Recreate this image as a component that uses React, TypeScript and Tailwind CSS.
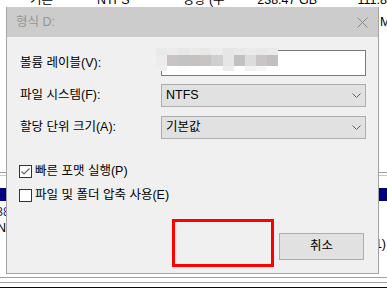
import React from 'react';

const blurTop = ['bg-[#e9e9e9]', 'bg-[#ebebeb]', 'bg-[#e7e7e7]', 'bg-[#eaeaea]', 'bg-[#e8e8e8]', 'bg-[#ececec]', 'bg-[#e6e6e6]', 'bg-[#e9e9e9]', 'bg-[#ebebeb]', 'bg-[#e8e8e8]', 'bg-[#eaeaea]'];
const blurMid = ['bg-[#ececec]', 'bg-[#c9c3c3]', 'bg-[#c3c3c3]', 'bg-[#c6c2c2]', 'bg-[#c8c4c4]', 'bg-[#cfcfcf]', 'bg-[#e6e6e6]', 'bg-[#bec2c4]', 'bg-[#dcdcdc]', 'bg-[#cac5c5]', 'bg-[#bfc0c2]'];
const blurBot = ['bg-[#efefef]', 'bg-[#ffffff]', 'bg-[#fdfdfd]', 'bg-[#ffffff]', 'bg-[#ffffff]', 'bg-[#fbfbfb]', 'bg-[#ececec]', 'bg-[#ffffff]', 'bg-[#f3f1f1]', 'bg-[#f6f7f9]', 'bg-[#ffffff]'];

function Chevron() {
  return (
    <svg width="9" height="5" viewBox="0 0 9 5" className="mr-[4px]">
      <path d="M0.5 0.5 L4.5 4.5 L8.5 0.5" fill="none" stroke="#606060" strokeWidth="1" />
    </svg>
  );
}

function Select({ value }: { value: string }) {
  return (
    <div className="flex h-[23px] w-[205px] items-center justify-between border border-[#adadad] bg-[#e1e1e1] pl-[4px] text-black">
      <span>{value}</span>
      <Chevron />
    </div>
  );
}

function Checkbox({ checked, label }: { checked: boolean; label: string }) {
  return (
    <div className="-ml-[1px] flex h-[13px] items-center gap-[3px]">
      <div className="flex h-[13px] w-[13px] items-center justify-center border border-[#333333] bg-white">
        {checked && (
          <svg width="11" height="11" viewBox="0 0 11 11">
            <path d="M1.5 5.5 L4 8 L9.5 2.5" fill="none" stroke="#666666" strokeWidth="1.2" />
          </svg>
        )}
      </div>
      <span className="leading-[13px] text-black">{label}</span>
    </div>
  );
}

export default function App() {
  return (
    <div className="relative h-[288px] w-[387px] overflow-hidden bg-white font-['Liberation_Sans','Noto_Sans_CJK_KR',sans-serif] text-[12.5px] text-black">
      {/* disk list behind the dialog */}
      <div className="flex flex-col">
        <div className="-mt-[8px] flex h-[16px] items-center whitespace-nowrap pl-[30px]">
          <span className="w-[68px]">기본</span>
          <span className="w-[87px]">NTFS</span>
          <span className="w-[76px]">정상 (주</span>
          <span className="w-[102px]">238.47 GB</span>
          <span>111.8</span>
        </div>
        <div className="h-[6px]" />
        <div className="flex h-[16px] items-center pl-[380px]">MI</div>
        <div className="h-[142px]" />
        <div className="h-px bg-[#a0a0a0]" />
        <div className="h-[2px]" />
        <div className="h-px bg-[#c8c8c8]" />
        <div className="h-[12px]" />
        <div className="h-[13px] bg-[#000080]" />
        <div className="h-[3px]" />
        <div className="flex h-[16px] items-center -ml-[4px] text-[#1a2a6a]">38</div>
        <div className="flex h-[16px] items-center -ml-[3px]">NT</div>
        <div className="flex h-[16px] items-center justify-between pl-[12px] pr-[1px]">
          <span>]</span>
          <span>1)</span>
        </div>
        <div className="h-[25px]" />
        <div className="h-px bg-[#a0a0a0]" />
        <div className="h-[4px]" />
        <div className="h-px bg-[#a0a0a0]" />
        <div className="h-[4px]" />
        <div className="h-[2px] bg-[#000060]" />
      </div>

      {/* format dialog */}
      <div className="absolute left-[6px] top-[7px] flex h-[267px] w-[373px] flex-col border border-t-0 border-[#a3a3a3] bg-[#f0f0f0]">
        <div className="flex h-[30px] items-center justify-between bg-[#cccccc] pl-[9px] pr-[10px]">
          <span className="text-[#959595]">형식 D:</span>
          <svg width="11" height="11" viewBox="0 0 11 11">
            <path d="M0.5 0.5 L10.5 10.5 M10.5 0.5 L0.5 10.5" stroke="#8a8a8a" strokeWidth="1" />
          </svg>
        </div>

        <div className="flex flex-col pl-[13px] pt-[13px]">
          <div className="flex h-[26px] items-center">
            <span className="w-[141px]">볼륨 레이블(V):</span>
            <div className="h-[26px] w-[205px] border border-[#7a7a7a] bg-white" />
          </div>
          <div className="mt-[8px] flex items-center">
            <span className="w-[141px]">파일 시스템(F):</span>
            <Select value="NTFS" />
          </div>
          <div className="mt-[9px] flex items-center">
            <span className="w-[141px]">할당 단위 크기(A):</span>
            <Select value="기본값" />
          </div>

          <div className="mt-[26px]">
            <Checkbox checked label="빠른 포맷 실행(P)" />
          </div>
          <div className="mt-[11px]">
            <Checkbox checked={false} label="파일 및 폴더 압축 사용(E)" />
          </div>

          <div className="mt-[17px] flex items-start">
            <div className="ml-[152px] h-[48px] w-[102px] border-[3px] border-[#ff0000]" />
            <button className="ml-[5px] mt-[14px] flex h-[27px] w-[85px] items-center justify-center border border-[#adadad] bg-[#e1e1e1] text-black">
              취소
            </button>
          </div>
        </div>

        {/* redacted label text */}
        <div className="absolute left-[149px] top-[41px] flex w-[122px] flex-col">
          <div className="flex h-[7px]">
            {blurTop.map((c, i) => (
              <div key={i} className={`h-full flex-1 ${c}`} />
            ))}
          </div>
          <div className="flex h-[11px]">
            {blurMid.map((c, i) => (
              <div key={i} className={`h-full flex-1 ${c}`} />
            ))}
          </div>
          <div className="flex h-[5px]">
            {blurBot.map((c, i) => (
              <div key={i} className={`h-full flex-1 ${c}`} />
            ))}
          </div>
        </div>
      </div>
    </div>
  );
}
